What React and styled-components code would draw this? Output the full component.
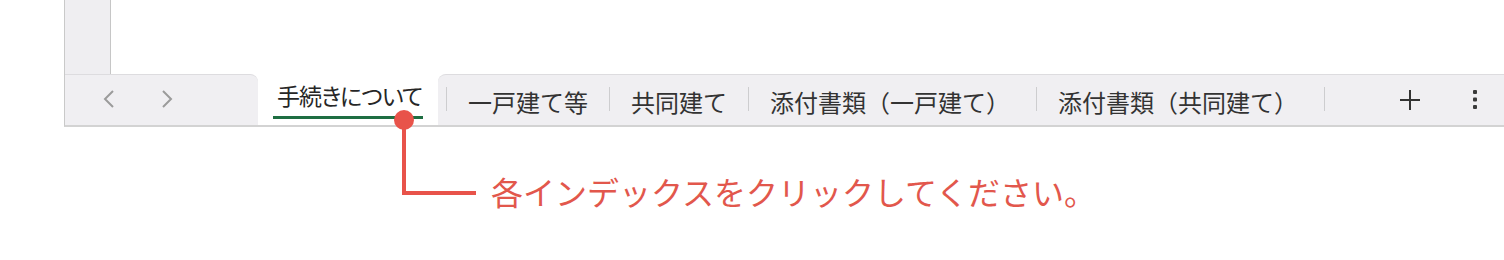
import React from "react";
import styled, { createGlobalStyle } from "styled-components";

const GlobalStyle = createGlobalStyle`
    body {
        margin: 0;
        background: #ffffff;
        font-family: "Noto Sans CJK JP", "Noto Sans", sans-serif;
    }
`;

// wide: labels ending in a full-width bracket get a little more room on the right
const TABS = [
    { label: "一戸建て等" },
    { label: "共同建て" },
    { label: "添付書類（一戸建て）", wide: true },
    { label: "添付書類（共同建て）", wide: true }
];

const App = () => {
    return (
        <Page>
            <GlobalStyle />
            <Sheet>
                <GridArea>
                    <RowHeader />
                    <Cells />
                </GridArea>
                <TabBar>
                    <NavArea>
                        <NavButton>
                            <svg width="12" height="18" viewBox="0 0 12 18">
                                <polyline points="10,1 2,9 10,17" fill="none" stroke="#9b9b9b" strokeWidth="2" />
                            </svg>
                        </NavButton>
                        <NavButton>
                            <svg width="12" height="18" viewBox="0 0 12 18">
                                <polyline points="2,1 10,9 2,17" fill="none" stroke="#9b9b9b" strokeWidth="2" />
                            </svg>
                        </NavButton>
                    </NavArea>
                    <ActiveTab>
                        <ActiveLabel>手続きについて</ActiveLabel>
                    </ActiveTab>
                    <TabStrip>
                        <Divider />
                        {TABS.map((t) => (
                            <React.Fragment key={t.label}>
                                <Tab $wide={t.wide}>{t.label}</Tab>
                                <Divider />
                            </React.Fragment>
                        ))}
                        <Actions>
                            <IconButton>
                                <svg width="22" height="22" viewBox="0 0 22 22">
                                    <path d="M11 1v20M1 11h20" stroke="#333" strokeWidth="2" />
                                </svg>
                            </IconButton>
                            <IconButton>
                                <svg width="6" height="20" viewBox="0 0 6 20">
                                    <rect x="1" y="0" width="4" height="4" rx="1" fill="#3a3a3a" />
                                    <rect x="1" y="7.5" width="4" height="4" rx="1" fill="#3a3a3a" />
                                    <rect x="1" y="15" width="4" height="4" rx="1" fill="#3a3a3a" />
                                </svg>
                            </IconButton>
                        </Actions>
                    </TabStrip>
                </TabBar>
            </Sheet>
            <Callout>
                <Leader>
                    <Dot />
                </Leader>
                <CalloutText>各インデックスをクリックしてください。</CalloutText>
            </Callout>
        </Page>
    );
};

const Page = styled.div`
    width: 1504px;
    height: 260px;
    overflow: hidden;
    background: #ffffff;
`;

const Sheet = styled.div`
    margin-left: 64px;
    display: flex;
    flex-direction: column;
`;

const GridArea = styled.div`
    display: flex;
    height: 74px;
`;

const RowHeader = styled.div`
    width: 47px;
    box-sizing: border-box;
    background: #efeef1;
    border-left: 1px solid #c9c9c9;
    border-right: 1px solid #c6c6c6;
`;

const Cells = styled.div`
    flex: 1;
    background: #ffffff;
`;

const TabBar = styled.div`
    display: flex;
    height: 53px;
    box-sizing: border-box;
    border-left: 1px solid #c9c9c9;
    border-bottom: 2px solid #d3d3d3;
`;

const NavArea = styled.div`
    width: 193px;
    box-sizing: border-box;
    display: flex;
    align-items: center;
    gap: 18px;
    padding: 0 0 2px 24px;
    background: #f0eff2;
    border-top: 1px solid #dddcdf;
    border-top-right-radius: 8px;
`;

const NavButton = styled.div`
    width: 40px;
    height: 30px;
    display: flex;
    align-items: center;
    justify-content: center;
`;

const ActiveTab = styled.div`
    width: 180px;
    height: 49px;
    box-sizing: border-box;
    padding: 10px 15px 0 15px;
    background: #ffffff;
    border-bottom-left-radius: 6px;
    border-bottom-right-radius: 6px;
`;

const ActiveLabel = styled.div`
    padding: 0 2px 9px 4px;
    font-size: 23px;
    line-height: 23px;
    letter-spacing: -1px;
    color: #262626;
    white-space: nowrap;
    font-feature-settings: "palt";
    border-bottom: 3px solid #1e6e42;
`;

const TabStrip = styled.div`
    flex: 1;
    display: flex;
    align-items: center;
    box-sizing: border-box;
    padding-left: 8px;
    background: #f0eff2;
    border-top: 1px solid #dddcdf;
    border-top-left-radius: 8px;
`;

const Divider = styled.div`
    width: 1px;
    height: 24px;
    margin-bottom: 3px;
    background: #cdcdcf;
`;

const Tab = styled.div`
    padding: 4px ${(p) => (p.$wide ? "26px" : "21px")} 0 21px;
    font-size: 24px;
    line-height: 24px;
    color: #333333;
    white-space: nowrap;
`;

const Actions = styled.div`
    margin-left: auto;
    display: flex;
    align-items: center;
    gap: 25px;
    padding-right: 9px;
`;

const IconButton = styled.div`
    width: 40px;
    height: 36px;
    display: flex;
    align-items: center;
    justify-content: center;
`;

const Callout = styled.div`
    display: flex;
    align-items: flex-start;
    padding-left: 402px;
`;

const Leader = styled.div`
    position: relative;
    width: 74px;
    height: 75px;
    margin-top: -7px;
    box-sizing: border-box;
    border-left: 4px solid #e8534a;
    border-bottom: 4px solid #e8534a;
`;

const Dot = styled.div`
    position: absolute;
    top: -10px;
    left: -12px;
    width: 20px;
    height: 20px;
    border-radius: 50%;
    background: #e8534a;
`;

const CalloutText = styled.div`
    margin: 48px 0 0 15px;
    font-size: 32px;
    line-height: 32px;
    color: #e2574c;
    white-space: nowrap;
`;

export default App;
